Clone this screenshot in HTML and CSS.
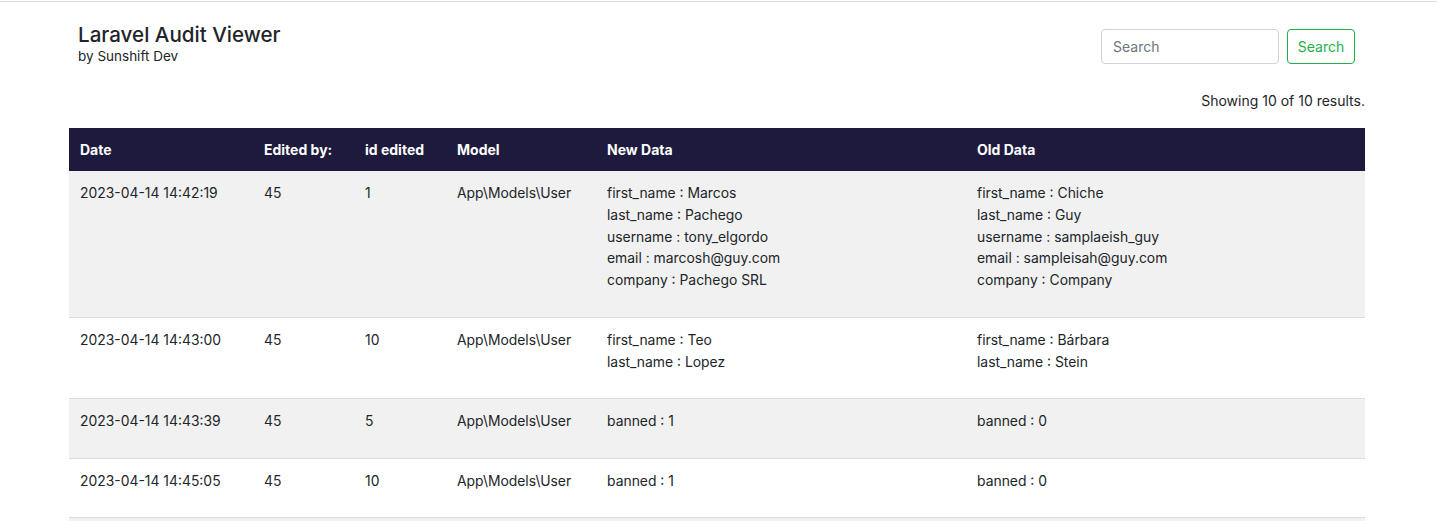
FILE: index.html
```html
<!DOCTYPE html>
<html lang="en">
<head>
<meta charset="utf-8">
<title>Laravel Audit Viewer</title>
<link rel="stylesheet" href="styles.css">
</head>
<body>
<div class="topline"></div>
<div class="container">
  <header class="header">
    <div class="brand">
      <h1 class="title">Laravel Audit Viewer</h1>
      <div class="subtitle">by Sunshift Dev</div>
    </div>
    <form class="search">
      <input class="search-input" type="text" placeholder="Search">
      <button class="search-btn" type="button">Search</button>
    </form>
  </header>
  <div class="summary">Showing 10 of 10 results.</div>
  <table class="audit">
    <colgroup>
      <col class="c-date"><col class="c-by"><col class="c-id"><col class="c-model"><col class="c-new"><col class="c-old">
    </colgroup>
    <thead>
      <tr><th>Date</th><th>Edited by:</th><th>id edited</th><th>Model</th><th>New Data</th><th>Old Data</th></tr>
    </thead>
    <tbody>
      <tr class="odd">
        <td>2023-04-14 14:42:19</td><td>45</td><td>1</td><td>App\Models\User</td>
        <td>first_name : Marcos<br>last_name : Pachego<br>username : tony_elgordo<br>email : marcosh@guy.com<br>company : Pachego SRL</td>
        <td>first_name : Chiche<br>last_name : Guy<br>username : samplaeish_guy<br>email : sampleisah@guy.com<br>company : Company</td>
      </tr>
      <tr>
        <td>2023-04-14 14:43:00</td><td>45</td><td>10</td><td>App\Models\User</td>
        <td>first_name : Teo<br>last_name : Lopez</td>
        <td>first_name : Bárbara<br>last_name : Stein</td>
      </tr>
      <tr class="odd">
        <td>2023-04-14 14:43:39</td><td>45</td><td>5</td><td>App\Models\User</td>
        <td>banned : 1</td>
        <td>banned : 0</td>
      </tr>
      <tr>
        <td>2023-04-14 14:45:05</td><td>45</td><td>10</td><td>App\Models\User</td>
        <td>banned : 1</td>
        <td>banned : 0</td>
      </tr>
      <tr class="odd">
        <td>2023-04-14 14:46:12</td><td>45</td><td>5</td><td>App\Models\User</td>
        <td>banned : 0</td>
        <td>banned : 1</td>
      </tr>
    </tbody>
  </table>
</div>
</body>
</html>
```
FILE: styles.css
```css
html, body {
  margin: 0;
  padding: 0;
  background: #ffffff;
  color: #212529;
  font-family: Inter, "Noto Sans", "Liberation Sans", sans-serif;
  font-size: 14px;
}
.topline {
  height: 1px;
  margin-top: 1px;
  background: #dcdcdc;
}
.container {
  width: 1296px;
  margin: 0 72px 0 69px;
}
.header {
  display: flex;
  justify-content: space-between;
  align-items: flex-start;
  padding: 20px 10px 0 9px;
}
.title {
  margin: 0;
  font-size: 20.6px;
  font-weight: 500;
  line-height: 26px;
  color: #212529;
}
.subtitle {
  font-size: 13.5px;
  line-height: 16px;
}
.search {
  display: flex;
  gap: 8px;
  margin-top: 7px;
}
.search-input {
  box-sizing: border-box;
  width: 178px;
  height: 35px;
  padding: 0 11px;
  border: 1px solid #ced4da;
  border-radius: 4px;
  font-family: inherit;
  font-size: 14px;
  color: #212529;
}
.search-input::placeholder {
  color: #6c757d;
}
.search-btn {
  box-sizing: border-box;
  width: 68px;
  height: 35px;
  border: 1px solid #1eb04a;
  border-radius: 4px;
  background: #ffffff;
  color: #1eb04a;
  font-family: inherit;
  font-size: 14px;
}
.summary {
  margin-top: 27px;
  margin-bottom: 17px;
  text-align: right;
  line-height: 20px;
}
.audit {
  width: 100%;
  table-layout: fixed;
  border-collapse: collapse;
}
.c-date { width: 184px; }
.c-by { width: 101px; }
.c-id { width: 92px; }
.c-model { width: 150px; }
.c-new { width: 370px; }
.c-old { width: 399px; }
.audit th {
  background: #1d1a3d;
  color: #ffffff;
  font-weight: 700;
  text-align: left;
  padding: 11px 11px;
  line-height: 21px;
}
.audit td {
  vertical-align: top;
  padding: 12px 11px 24.8px;
  line-height: 21.8px;
  font-size: 13.9px;
  border-top: 1px solid #dcdcdc;
}
.audit tbody tr:first-child td {
  border-top: 0;
}
.audit tr.odd td {
  background: #f1f1f1;
}
```
